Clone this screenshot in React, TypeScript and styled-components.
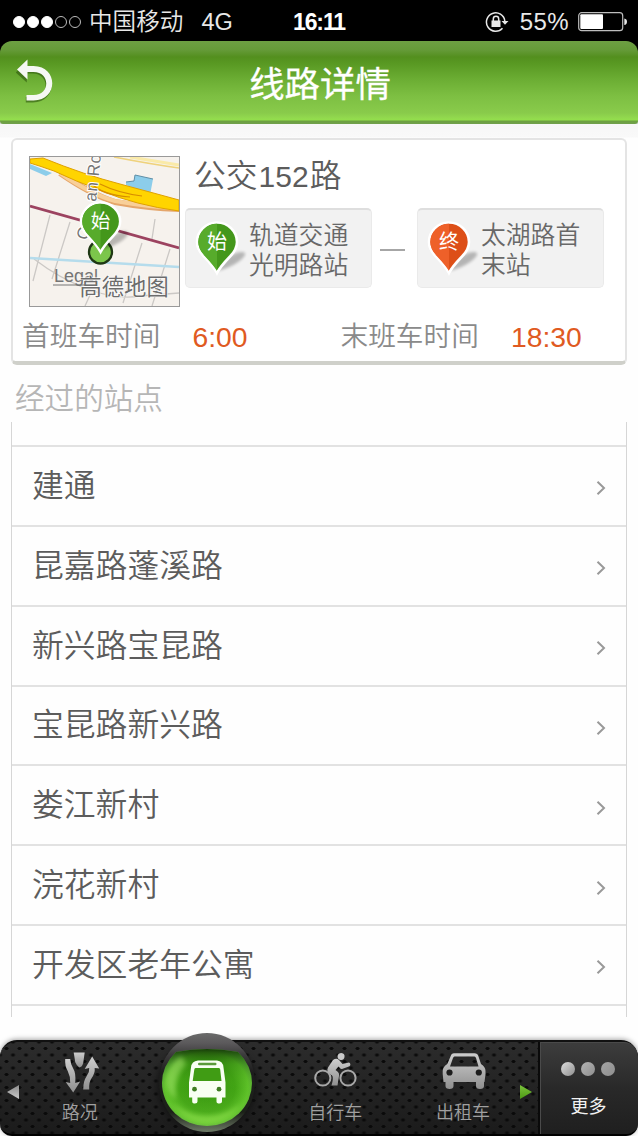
import React from "react";
import styled, { createGlobalStyle } from "styled-components";

const GlobalStyle = createGlobalStyle`
  * { box-sizing: border-box; }
  html, body { margin: 0; padding: 0; background: #fefefe; }
  body {
    font-family: "Liberation Sans", "Noto Sans CJK SC", sans-serif;
    font-weight: 350;
    color: #5c5c5c;
  }
`;

const Screen = styled.div`
  width: 638px;
  height: 1136px;
  display: flex;
  flex-direction: column;
  overflow: hidden;
  background: #fefefe;
`;

const StatusBar = styled.div`
  height: 41px;
  flex: none;
  display: grid;
  grid-template-columns: 1fr auto 1fr;
  align-items: center;
  padding: 2px 10px 0 13px;
  background: #000;
  color: #e8e8e8;
  font-size: 24px;
  line-height: 36px;
`;

const StatusGroup = styled.div<{ $end?: boolean }>`
  display: flex;
  align-items: center;
  justify-content: ${(p) => (p.$end ? "flex-end" : "flex-start")};
`;

const Signal = styled.div`
  display: flex;
  gap: 2px;
  margin-right: 8px;
`;

const SignalDot = styled.i<{ $on: boolean }>`
  width: 12px;
  height: 12px;
  border-radius: 50%;
  border: 1px solid ${(p) => (p.$on ? "#fff" : "#bbb")};
  background: ${(p) => (p.$on ? "#fff" : "transparent")};
`;

const Carrier = styled.span`
  font-size: 23.6px;
`;

const Network = styled.span`
  margin-left: 18px;
  font-size: 23.5px;
`;

const Clock = styled.span`
  font-size: 23px;
  font-weight: 700;
  letter-spacing: -1.1px;
  margin-right: 3px;
  color: #fff;
`;

const Percent = styled.span`
  margin: 0 9px 0 11px;
  font-size: 24px;
  letter-spacing: 0.4px;
`;

const HeaderBack = styled.div`
  flex: none;
  background: linear-gradient(#000 50%, #f4f4f4 50%);
`;

const Header = styled.header`
  height: 83px;
  display: grid;
  grid-template-columns: 90px 1fr 90px;
  align-items: center;
  border-radius: 12px 12px 3px 3px;
  background: linear-gradient(
    #6d9f43 0,
    #659a38 9px,
    #538f1e 16px,
    #589822 22px,
    #6bad33 38px,
    #7dbf42 55px,
    #89cb4b 72px,
    #92d94e 77px,
    #93de4c 79px,
    #6ca040 80px,
    #71a04c 83px
  );
  box-shadow: 0 1px 3px rgba(0, 0, 0, 0.3);
`;

const BackButton = styled.button`
  width: 56px;
  height: 83px;
  padding: 0 0 6px 15px;
  border: 0;
  background: none;
`;

const Title = styled.h1`
  margin: 4px 0 0 2px;
  text-align: center;
  font-size: 35.4px;
  font-weight: 400;
  -webkit-text-stroke: 0.3px #fff;
  line-height: 50px;
  color: #fff;
`;

const Body = styled.main`
  flex: 1;
  min-height: 0;
  display: flex;
  flex-direction: column;
  background: linear-gradient(#f7f7f7 0, #f9f9f9 13px, #fefefe 14px);
  padding: 14px 11px 0;
`;

const Card = styled.section`
  height: 227px;
  flex: none;
  display: flex;
  flex-direction: column;
  padding: 16px 16px 0 16px;
  border: 2px solid #e4e4e4;
  border-bottom: 4px solid #cfd0ca;
  border-radius: 6px;
  background: #fff;
`;

const CardTop = styled.div`
  display: flex;
`;

const MapThumb = styled.div`
  width: 151px;
  height: 151px;
  flex: none;
  border: 1px solid #999;
  svg { display: block; }
`;

const RouteInfo = styled.div`
  display: flex;
  flex-direction: column;
  margin-left: 5px;
`;

const RouteName = styled.h2`
  display: flex;
  margin: 0 0 0 9px;
  height: 52px;
  padding-top: 1px;
  font-size: 31.8px;
  font-weight: inherit;
  line-height: 39px;
  color: #5c5c5c;
`;

const RouteNumber = styled.span`
  font-size: 30px;
  line-height: 40px;
  margin: 0 1px;
`;

const Ends = styled.div`
  display: flex;
  align-items: center;
`;

const EndBox = styled.div`
  width: 187px;
  height: 80px;
  display: flex;
  padding: 11px 0 0 10px;
  border: 1px solid #eaeaea;
  border-top: 2px solid #dedede;
  border-radius: 5px;
  background: #f2f2f2;
`;

const EndName = styled.div`
  width: 104px;
  font-size: 24.8px;
  line-height: 30px;
  margin-left: 3px;
  color: #686868;
`;

const Dash = styled.i`
  width: 25px;
  height: 2px;
  margin: 4px 12px 0 8px;
  background: #a6a6a6;
`;

const Times = styled.div`
  display: flex;
  align-items: center;
  margin: 10px 0 0 -7px;
  font-size: 27.7px;
  line-height: 40px;
  color: #8a8a8a;
`;

const Time = styled.span<{ $wide: number }>`
  width: ${(p) => p.$wide}px;
  margin-left: 32px;
  font-size: 28.3px;
  color: #e05a21;
`;

const SectionTitle = styled.h3`
  margin: 0 0 0 4px;
  height: 57px;
  padding-top: 13px;
  font-size: 29.6px;
  font-weight: inherit;
  line-height: 42px;
  color: #b6b6b6;
`;

const StopList = styled.ul`
  height: 595px;
  flex: none;
  margin: 0;
  padding: 23px 0 0;
  list-style: none;
  overflow: hidden;
  border: solid #d6d6d6;
  border-width: 0 1px 0 1px;
`;

const StopRow = styled.li`
  height: 79.85px;
  display: flex;
  align-items: center;
  justify-content: space-between;
  padding: 0 20px;
  border-top: 2px solid #e2e2e2;
  font-size: 31.8px;
  line-height: 46px;
  color: #5c5c5c;
`;

const TabBar = styled.nav`
  height: 96px;
  flex: none;
  display: flex;
  position: relative;
  border-radius: 17px 17px 12px 12px;
  border-top: 2px solid #111;
  border-bottom: 2px solid #000;
  background:
    radial-gradient(ellipse 2.6px 1.7px, #0a0a0a 60%, transparent) 0 0 / 13px 13px,
    radial-gradient(ellipse 2.6px 1.7px, #0a0a0a 60%, transparent) 6.5px 6.5px / 13px 13px,
    linear-gradient(#2c2c2c, #1b1b1b);
  box-shadow: 0 -1px 5px rgba(0, 0, 0, 0.35);
  padding-left: 16px;
`;

const Tab = styled.button`
  width: 127.7px;
  flex: none;
  display: flex;
  flex-direction: column;
  align-items: center;
  padding: 9px 0 0;
  border: 0;
  background: none;
  font-family: inherit;
  font-weight: inherit;
  color: #a0a0a0;
`;

const TabLabel = styled.span`
  margin-top: 7px;
  font-size: 18px;
  line-height: 26px;
`;

const Orb = styled.div`
  margin: -19px 2px 0 0;
  svg { display: block; }
`;

const More = styled.button`
  width: 100px;
  margin-left: auto;
  display: flex;
  flex-direction: column;
  align-items: center;
  gap: 18px;
  padding: 20px 1px 0 0;
  border: 0;
  border-left: 2px solid #0a0a0a;
  border-radius: 0 15px 12px 0;
  background: linear-gradient(#3d3d3d, #292929 50%, #1f1f1f);
  box-shadow: inset 1px 1px 0 #4a4a4a;
  font-family: inherit;
  font-size: 18px;
  line-height: 26px;
  color: #f2f2f2;
`;

const Dots = styled.div`
  display: flex;
  gap: 6px;
  padding-right: 2px;
`;

const Dot = styled.i<{ $tone: string }>`
  width: 14px;
  height: 14px;
  border-radius: 50%;
  background: linear-gradient(135deg, ${(p) => p.$tone}, #8e8e8e);
`;

const ScrollArrow = styled.i<{ $next?: boolean }>`
  position: absolute;
  top: 43px;
  left: ${(p) => (p.$next ? 520 : 7)}px;
  width: 12px;
  height: 14px;
  background: ${(p) => (p.$next ? "linear-gradient(#7cc43c, #4c9a14)" : "linear-gradient(#8c8c8c, #c9c9c9)")};
  clip-path: ${(p) => (p.$next ? "polygon(0 0, 100% 50%, 0 100%)" : "polygon(100% 0, 0 50%, 100% 100%)")};
`;

const PinShape = ({ end, label }: { end?: boolean; label: string }) => {
  const light = end ? "#ee6029" : "#57ab2b";
  const dark = end ? "#dd4f18" : "#44971b";
  return (
    <g>
      <path
        d="M22 50 Q30 36 40 32 Q50 29 49 34 Q44 43 22 50Z"
        fill="#000"
        opacity=".25"
        style={{ filter: "blur(1.5px)" }}
      />
      <path
        d="M21 52 Q18 46 8 35.500 Q1 28.500 1 21 A20 19.500 0 0 1 41 21 Q41 28.500 34 35.500 Q24 46 21 52Z"
        fill={dark}
        stroke="#fff"
        strokeWidth="2.600"
      />
      <path d="M21 50 Q18 45 8.500 34.800 Q2.300 28 2.300 21 A18.700 18.200 0 0 1 21 2.800Z" fill={light} />
      <text
        x="21"
        y="28"
        textAnchor="middle"
        fontSize="20"
        fontWeight="400"
        fill="#fff"
        fontFamily="Noto Sans CJK SC, sans-serif"
      >
        {label}
      </text>
    </g>
  );
};

const Pin = ({ end, label }: { end?: boolean; label: string }) => (
  <svg width="50" height="56" viewBox="0 0 50 56" overflow="visible">
    <PinShape end={end} label={label} />
  </svg>
);

const RouteMap = () => (
  <svg width="149" height="149" viewBox="0 0 149 149">
    <rect width="149" height="149" fill="#f6f2ed" />
    <path d="M0 7 L22 16 L16 19 L0 12Z" fill="#8ccdea" />
    <path d="M96 25 L104 24 L105 18 L123 22 L120 38 L96 28Z" fill="#8ccdea" />
    <path d="M96 25 L104 24 L105 18 L123 22" fill="none" stroke="#5f8ea6" strokeWidth="1" />
    <g stroke="#cbc8c5" strokeWidth="1.300" fill="none">
      <path d="M20 58 L3 124 M40 65 L22 122 M125 62 L122 82 M112 86 L93 146 M140 92 L122 149 M4 102 Q30 122 60 133 Q90 143 110 139 L149 136 M60 138 L55 149" />
    </g>
    <path d="M84 0 Q120 7 149 11" fill="none" stroke="#efd27c" strokeWidth="1.600" />
    <path d="M100 0 L149 8" stroke="#faeaa8" strokeWidth="3" />
    <path d="M30 16 Q62 38 85 45 Q118 51 149 52" fill="none" stroke="#e5a66b" strokeWidth="6" />
    <path d="M30 16 Q62 38 85 44 Q118 50 149 51" fill="none" stroke="#f8cf98" strokeWidth="4" />
    <path
      d="M0 2 L13 1 Q55 18 90 27 Q120 35 149 43 L149 54 Q105 48 72 34 Q45 24 24 14 Q10 9 0 6Z"
      fill="#ffd400"
      stroke="#dfa100"
      strokeWidth="1"
    />
    <path d="M62 27 Q72 38 100 40 M70 27 Q88 36 112 39" fill="none" stroke="#d78d00" strokeWidth="1.200" />
    <path d="M0 49 L149 91" stroke="#9c4360" strokeWidth="2.800" />
    <path d="M0 101 L149 110" stroke="#b5dcec" strokeWidth="2.500" />
    <g fontFamily="Liberation Sans, sans-serif" fill="#757575" stroke="#fff" strokeWidth="2" paintOrder="stroke">
      <text transform="translate(66 45) rotate(-84)" fontSize="17" letterSpacing=".6">an Ro</text>
      <text transform="translate(57 84) rotate(-72)" fontSize="17">C</text>
      <text x="24" y="125" fontSize="18" stroke="none">Legal</text>
      <text
        x="49.500"
        y="137.500"
        fontSize="22.300"
        fontWeight="400"
        fill="#6c6c6c"
        fontFamily="Noto Sans CJK SC, sans-serif"
        strokeWidth="1.200"
      >
        高德地图
      </text>
    </g>
    <path d="M23 128 H67" stroke="#757575" strokeWidth="1" />
    <circle cx="70.500" cy="95" r="11.500" fill="#7cc64b" stroke="#1f3814" strokeWidth="2.300" />
    <g transform="translate(50 44) scale(.98)">
      <PinShape label="始" />
    </g>
  </svg>
);

const BackIcon = () => (
  <svg width="40" height="46" viewBox="0 0 40 46" style={{ display: "block" }}>
    <g transform="translate(1.500 2)">
      <path
        d="M0 12 L11 1 V7 H17 C42 7 42 42 17 42 H10 V36.500 H17 C34 36.500 34 13 17 13 H11 V22Z"
        fill="#315c10"
        opacity=".65"
        transform="translate(-.7 1.500)"
      />
      <path
        d="M.5 10.500 L11 .5 V7 H17 C42 7 42 41.500 17 41.500 H10 V36 H17 C34 36 34 13 17 13 H11 V20.500Z"
        fill="#f6f8f4"
      />
    </g>
  </svg>
);

const LockIcon = () => (
  <svg width="24" height="22" viewBox="0 0 24 22" fill="none" stroke="#e8e8e8">
    <path d="M17.500 17.200 A9.200 9.200 0 1 1 19.800 10" strokeWidth="1.500" />
    <path d="M16.500 10 H23.500 L20 13.800Z" fill="#e8e8e8" stroke="none" />
    <rect x="6.500" y="9.500" width="9" height="6.500" fill="#e8e8e8" stroke="none" />
    <path d="M8.300 10 V8 A2.700 2.700 0 0 1 13.700 8 V10" strokeWidth="1.500" />
  </svg>
);

const BatteryIcon = () => (
  <svg width="50" height="20" viewBox="0 0 50 20">
    <rect x=".7" y=".7" width="44" height="18" rx="3" fill="none" stroke="#bdbdbd" strokeWidth="1.200" />
    <rect x="2.300" y="2.300" width="22.700" height="14.800" rx="1" fill="#fff" />
    <path d="M46.300 6.500 Q49 7 49 9.700 Q49 12.500 46.300 13Z" fill="#e8e8e8" />
  </svg>
);

const Chevron = () => (
  <svg width="10" height="16" viewBox="0 0 10 16" style={{ marginTop: 5 }}>
    <path d="M1.500 1.800 L8 8 L1.500 14.200" fill="none" stroke="#999" strokeWidth="2" />
  </svg>
);

const MetalFill = ({ id }: { id: string }) => (
  <linearGradient id={id} x1="0" y1="0" x2="0" y2="1">
    <stop offset="0" stopColor="#cecece" />
    <stop offset="1" stopColor="#8f8f8f" />
  </linearGradient>
);

const TrafficIcon = () => (
  <svg width="40" height="42" viewBox="0 0 40 42">
    <defs>
      <MetalFill id="metalRoad" />
    </defs>
    <g fill="url(#metalRoad)" transform="translate(-.8 0)">
      <path d="M14.500 1.500 H25.500 L24 12 Q23 16 20 16.500 Q17.500 15 16 11Z" />
      <path d="M6 8 H11 Q11.500 14 14 17.500 Q17 22 16 32 L21 30.500 L14 41.500 L6.500 31 L11 32 Q11.500 26 8.500 20 Q5.500 15 6 8Z" />
      <path d="M33 5.500 L40 17.500 L35.500 17 Q36 22 32.500 27 Q29.500 31 30 38.500 H24 Q24 30 27.500 25 Q30.500 21 30 17 L25.500 18Z" />
    </g>
  </svg>
);

const BikeIcon = () => (
  <svg width="44" height="42" viewBox="0 0 44 42">
    <defs>
      <MetalFill id="metalBike" />
    </defs>
    <g fill="none" stroke="#a8a8a8" strokeWidth="2">
      <circle cx="9.800" cy="27" r="7.600" />
      <circle cx="35" cy="27" r="7.600" />
    </g>
    <path d="M24.500 5 Q25 2 28.500 2 Q32 2.500 31.500 6 Q31 9.500 27.500 9 Q24.500 8.500 24.500 5Z" fill="#cacaca" />
    <path
      d="M20 9 Q23.500 6.500 26 9 L29.500 13 L36 11.500 Q38.500 13 36.500 15.300 L29 18 Q27.500 18 26.500 16.500 L25.500 15.500 L22.500 19 L25 21 Q26.500 22.500 26 25 L24.500 34.500 H18.500 Q20.500 28 19.500 25 L15 21.500 Q13.500 19.500 15 16.500Z"
      fill="url(#metalBike)"
    />
  </svg>
);

const TaxiIcon = () => (
  <svg width="46" height="42" viewBox="0 0 46 42">
    <defs>
      <MetalFill id="metalCar" />
    </defs>
    <path
      d="M14 2.300 H34.500 Q37.500 2.300 38.500 5.500 L41 13 Q45.500 16 45.500 20 V23 L44.500 31 H44 V35 Q44 38 40 38 Q36 38 36 35 V31 H13.500 V35 Q13.500 38 9.500 38 Q5.500 38 5.500 35 V31 H3.500 L2.700 23 V20 Q2.700 16 7.300 13 L10.500 5.500 Q11.500 2.300 14 2.300Z M14.500 5.500 Q13.500 5.500 13 7 L10 15.500 H38.500 L36 7 Q35.500 5.500 34.500 5.500Z"
      fill="url(#metalCar)"
      fillRule="evenodd"
    />
    <circle cx="9.500" cy="21.500" r="3.100" fill="#1d1d1d" />
    <circle cx="38.800" cy="21.500" r="3.100" fill="#1d1d1d" />
  </svg>
);

const BusOrb = () => (
  <svg width="100" height="104" viewBox="0 0 100 104" overflow="visible">
    <defs>
      <linearGradient id="rim" x1="0" y1="0" x2="0" y2="1">
        <stop offset="0" stopColor="#6b6b6b" />
        <stop offset=".1" stopColor="#5c5a5c" />
        <stop offset=".22" stopColor="#3c3b3c" />
        <stop offset=".4" stopColor="#1d1d1d" />
        <stop offset=".8" stopColor="#1c2119" />
        <stop offset="1" stopColor="#6d7a66" />
      </linearGradient>
      <radialGradient id="glass" cx=".5" cy=".5" r=".52">
        <stop offset="0" stopColor="#318f0c" />
        <stop offset=".6" stopColor="#3d9f12" />
        <stop offset=".88" stopColor="#5cbf28" />
        <stop offset="1" stopColor="#59a838" />
      </radialGradient>
      <linearGradient id="shade" x1="0" y1="0" x2="0" y2="1">
        <stop offset="0" stopColor="#0c2a02" stopOpacity=".85" />
        <stop offset=".2" stopColor="#1f6605" stopOpacity=".35" />
        <stop offset=".5" stopColor="#6fd22c" stopOpacity=".1" />
        <stop offset="1" stopColor="#a5f15f" stopOpacity=".2" />
      </linearGradient>
    </defs>
    <ellipse cx="50" cy="54" rx="51" ry="46" fill="#111" opacity=".7" style={{ filter: "blur(3px)" }} />
    <ellipse cx="50" cy="50.500" rx="48" ry="49.500" fill="url(#rim)" style={{ filter: "blur(.6px)" }} />
    <path d="M19 20 Q50 14 81 20 Q95 34 95 51 A45 43 0 0 1 5 51 Q5 34 19 20Z" fill="url(#glass)" />
    <path d="M19 20 Q50 14 81 20 Q95 34 95 51 A45 43 0 0 1 5 51 Q5 34 19 20Z" fill="url(#shade)" />
    <path
      d="M16 71 Q28 91 50 91 Q72 91 84 71 Q70 84 50 84 Q30 84 16 71Z"
      fill="#8ee04c"
      opacity=".6"
      style={{ filter: "blur(2px)" }}
    />
    <path
      d="M9 47 Q12 31 24 24 L29 32 Q16 45 19 67 Q9 61 9 47Z"
      fill="#b6f27b"
      opacity=".45"
      style={{ filter: "blur(2.5px)" }}
    />
    <g transform="translate(0 -.5)">
      <path
        d="M41 29 H60 Q66 29.500 66.500 36 L68.500 51 V66 H65 V70 Q65 72 62.500 72 Q59.500 72 59.500 70 V66 H40.500 V70 Q40.500 72 38 72 Q35.200 72 35.200 70 V66 H32 V51 L34 36 Q34.500 29.500 41 29Z"
        fill="#f8fff2"
      />
      <rect x="41" y="31.300" width="18.500" height="2.500" rx="1.200" fill="#5a9a3a" />
      <path
        d="M38.500 36.500 H62 Q63 36.500 63.200 38 L64.500 49.500 H35.700 L37.300 38 Q37.500 36.500 38.500 36.500Z"
        fill="#409c14"
      />
      <circle cx="37.500" cy="57.700" r="2.400" fill="#3f7d22" />
      <circle cx="62" cy="57.700" r="2.400" fill="#3f7d22" />
    </g>
  </svg>
);

const stops = ["建通", "昆嘉路蓬溪路", "新兴路宝昆路", "宝昆路新兴路", "娄江新村", "浣花新村", "开发区老年公寓"];

export default function App() {
  return (
    <Screen>
      <GlobalStyle />
      <StatusBar>
        <StatusGroup>
          <Signal>
            {[true, true, true, false, false].map((on, i) => (
              <SignalDot key={i} $on={on} />
            ))}
          </Signal>
          <Carrier>中国移动</Carrier>
          <Network>4G</Network>
        </StatusGroup>
        <Clock>16:11</Clock>
        <StatusGroup $end>
          <LockIcon />
          <Percent>55%</Percent>
          <BatteryIcon />
        </StatusGroup>
      </StatusBar>
      <HeaderBack>
        <Header>
          <BackButton aria-label="返回">
            <BackIcon />
          </BackButton>
          <Title>线路详情</Title>
        </Header>
      </HeaderBack>
      <Body>
        <Card>
          <CardTop>
            <MapThumb>
              <RouteMap />
            </MapThumb>
            <RouteInfo>
              <RouteName>
                公交<RouteNumber>152</RouteNumber>路
              </RouteName>
              <Ends>
                <EndBox>
                  <Pin label="始" />
                  <EndName>轨道交通光明路站</EndName>
                </EndBox>
                <Dash />
                <EndBox>
                  <Pin end label="终" />
                  <EndName>太湖路首末站</EndName>
                </EndBox>
              </Ends>
            </RouteInfo>
          </CardTop>
          <Times>
            首班车时间<Time $wide={148}>6:00</Time>
            末班车时间<Time $wide={80}>18:30</Time>
          </Times>
        </Card>
        <SectionTitle>经过的站点</SectionTitle>
        <StopList>
          {stops.map((name) => (
            <StopRow key={name}>
              <span>{name}</span>
              <Chevron />
            </StopRow>
          ))}
          <StopRow />
        </StopList>
      </Body>
      <TabBar>
        <ScrollArrow />
        <Tab>
          <TrafficIcon />
          <TabLabel>路况</TabLabel>
        </Tab>
        <Tab aria-label="公交">
          <Orb>
            <BusOrb />
          </Orb>
        </Tab>
        <Tab>
          <BikeIcon />
          <TabLabel>自行车</TabLabel>
        </Tab>
        <Tab>
          <TaxiIcon />
          <TabLabel>出租车</TabLabel>
        </Tab>
        <ScrollArrow $next />
        <More>
          <Dots>
            <Dot $tone="#dedede" />
            <Dot $tone="#b4b4b4" />
            <Dot $tone="#a4a4a4" />
          </Dots>
          更多
        </More>
      </TabBar>
    </Screen>
  );
}
